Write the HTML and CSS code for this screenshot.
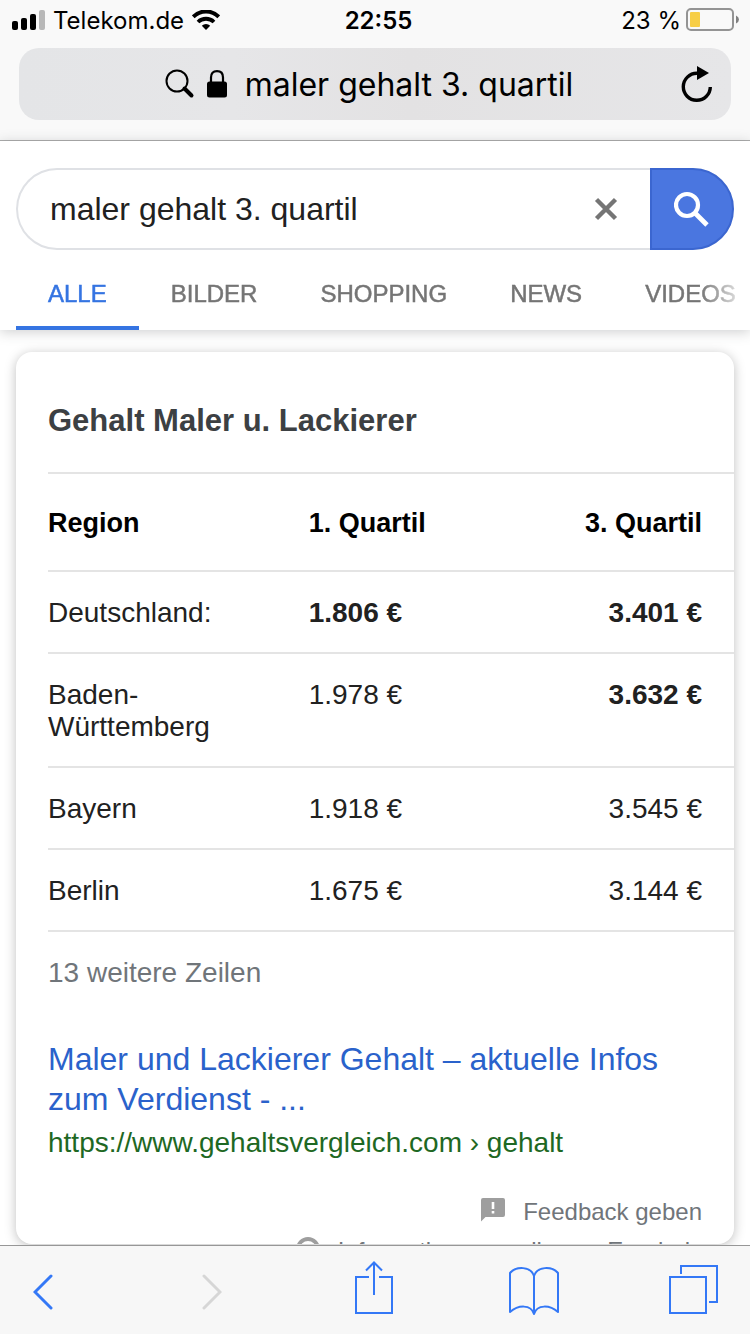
FILE: index.html
```html
<!DOCTYPE html>
<html lang="de">
<head>
  <meta charset="UTF-8">
  <meta name="viewport" content="width=device-width, initial-scale=1.0">
  <title>maler gehalt 3. quartil</title>
  <link rel="stylesheet" href="styles.css">
</head>
<body>
  <!-- browser top -->
  <header class="browser-top">
    <div class="status-bar">
      <div class="status-left">
        <svg class="signal" width="33" height="20" viewBox="0 0 33 20">
          <rect x="0" y="11" width="6" height="9" rx="2"/>
          <rect x="9" y="8" width="6" height="12" rx="2"/>
          <rect x="18" y="4" width="6" height="16" rx="2"/>
          <rect x="27" y="0" width="6" height="20" rx="2" fill="#b8b8b8"/>
        </svg>
        <span class="status-text">Telekom.de</span>
        <svg class="wifi" width="28" height="20" viewBox="0 0 28 20">
          <path d="M1.2 6.8 A18 18 0 0 1 26.8 6.8" fill="none" stroke="#000" stroke-width="4"/>
          <path d="M6 12 A11.5 11.5 0 0 1 22 12" fill="none" stroke="#000" stroke-width="3.8"/>
          <path d="M14 20 L9.8 15.8 A6 6 0 0 1 18.2 15.8 Z"/>
        </svg>
      </div>
      <span class="status-text clock">22:55</span>
      <div class="status-right">
        <span class="status-text">23 %</span>
        <svg class="battery" width="53" height="24" viewBox="0 0 53 24">
          <rect x="1" y="1" width="46" height="21" rx="4" fill="none" stroke="#949494" stroke-width="2"/>
          <rect x="4" y="4" width="10" height="15" rx="1" fill="#f7ce46"/>
          <path d="M50 7.5 Q53 9 53 11.5 Q53 14 50 15.5 Z" fill="#808080"/>
        </svg>
      </div>
    </div>
    <div class="address-bar">
      <svg width="30" height="30" viewBox="0 0 30 30">
        <circle cx="12" cy="12" r="10.5" fill="none" stroke="#000" stroke-width="2"/>
        <path d="M19.5 19.5 L26.5 26.5" stroke="#000" stroke-width="4" stroke-linecap="round"/>
      </svg>
      <svg class="lock" width="20" height="28" viewBox="0 0 20 28">
        <path d="M4 12 V7.5 Q4 1.2 10 1.2 Q16 1.2 16 7.5 V12" fill="none" stroke="#000" stroke-width="2.2"/>
        <rect x="0" y="11.5" width="20" height="16" rx="2.5"/>
      </svg>
      <span class="address">maler gehalt 3. quartil</span>
      <button class="reload" type="button" aria-label="Neu laden">
        <svg width="32" height="36" viewBox="0 0 32 36">
          <path d="M16 7.3 A13.5 13.5 0 1 0 29.3 21" fill="none" stroke="#000" stroke-width="3.4"/>
          <path d="M16 0 L28 7 L16 14 Z"/>
        </svg>
      </button>
    </div>
  </header>

  <!-- search box and tabs -->
  <div class="search-head">
    <form class="search-form">
      <input class="search-input" type="text" aria-label="Suche" value="maler gehalt 3. quartil">
      <button class="clear" type="button" aria-label="Löschen">
        <svg width="24" height="24" viewBox="0 0 24 24">
          <path d="M2.5 2.5 L21.5 21.5 M21.5 2.5 L2.5 21.5" stroke="#757575" stroke-width="4.4"/>
        </svg>
      </button>
      <button class="search-button" type="button" aria-label="Suchen">
        <svg width="36" height="36" viewBox="0 0 36 36" fill="none" stroke="#fff">
          <circle cx="13" cy="14" r="11" stroke-width="4.2"/>
          <path d="M21.5 22.5 L33 34" stroke-width="4.8"/>
        </svg>
      </button>
    </form>
    <nav class="tabs">
      <a class="tab active" href="#">ALLE</a>
      <a class="tab" href="#">BILDER</a>
      <a class="tab" href="#">SHOPPING</a>
      <a class="tab" href="#">NEWS</a>
      <a class="tab" href="#">VIDEOS</a>
    </nav>
  </div>

  <!-- results -->
  <main class="results">
    <article class="card">
      <h2>Gehalt Maler u. Lackierer</h2>
      <table>
        <thead>
          <tr><th>Region</th><th>1. Quartil</th><th>3. Quartil</th></tr>
        </thead>
        <tbody>
          <tr><td>Deutschland:</td><td><b>1.806 €</b></td><td><b>3.401 €</b></td></tr>
          <tr><td>Baden-<br>Württemberg</td><td>1.978 €</td><td><b>3.632 €</b></td></tr>
          <tr><td>Bayern</td><td>1.918 €</td><td>3.545 €</td></tr>
          <tr><td>Berlin</td><td>1.675 €</td><td>3.144 €</td></tr>
        </tbody>
      </table>
      <p class="more">13 weitere Zeilen</p>
      <a class="result-title" href="#">Maler und Lackierer Gehalt – aktuelle Infos zum Verdienst - ...</a>
      <p class="result-url">https://www.gehaltsvergleich.com › gehalt</p>
      <div class="card-footer">
        <a href="#">
          <svg width="24" height="24" viewBox="0 0 24 24">
            <path d="M2 0 H22 Q24 0 24 2 V17 Q24 19 22 19 H4.5 L0 23.5 V2 Q0 0 2 0 Z" fill="#9e9e9e"/>
            <path d="M10.7 4 H13.3 V11 H10.7 Z M10.7 13 H13.3 V15.6 H10.7 Z" fill="#fff"/>
          </svg>
          Feedback geben
        </a>
        <a href="#">
          <svg width="24" height="24" viewBox="0 0 24 24" fill="none" stroke="#9e9e9e">
            <circle cx="12" cy="12" r="10" stroke-width="4"/>
            <path d="M8 13 Q8 9 12 9 Q16 9 16 12 Q16 14 12 15 V18" stroke-width="2"/>
          </svg>
          Informationen zu diesem Ergebnis
        </a>
      </div>
    </article>
  </main>

  <!-- browser bottom -->
  <footer class="toolbar">
    <button type="button" aria-label="Zurück">
      <svg width="20" height="41" viewBox="0 0 20 41" fill="none" stroke="#3478f6">
        <path d="M18 2 L2 18 L18 34" stroke-width="3" stroke-linecap="round"/>
      </svg>
    </button>
    <button type="button" aria-label="Vorwärts" disabled>
      <svg width="20" height="41" viewBox="0 0 20 41" fill="none" stroke="#d6d6d6">
        <path d="M2 2 L18 18 L2 34" stroke-width="3" stroke-linecap="round"/>
      </svg>
    </button>
    <button type="button" aria-label="Teilen">
      <svg width="38" height="54" viewBox="0 0 38 54" fill="none" stroke="#3478f6" stroke-width="2">
        <path d="M14 16 H1 V52 H37 V16 H24"/>
        <path d="M19 34 V1.5 M11 9.5 L19 1.5 L27 9.5"/>
      </svg>
    </button>
    <button type="button" aria-label="Lesezeichen">
      <svg class="book" width="50" height="48" viewBox="0 0 50 48" fill="none" stroke="#3478f6" stroke-width="2" stroke-linejoin="round">
        <path d="M25 9 C22 -1 7 -1 1 6 V45 C9 38 22 37 25 47 C28 37 41 38 49 45 V6 C43 -1 28 -1 25 9 V47"/>
      </svg>
    </button>
    <button type="button" aria-label="Tabs">
      <svg width="50" height="50" viewBox="0 0 50 50" fill="none" stroke="#3478f6" stroke-width="2">
        <rect x="1" y="12" width="36" height="36"/>
        <path d="M12 9 V1 H48 V37 H40"/>
      </svg>
    </button>
  </footer>
</body>
</html>
```
FILE: styles.css
```css
* {
  box-sizing: border-box;
}

body {
  margin: 0;
  height: 100vh;
  display: flex;
  flex-direction: column;
  overflow: hidden;
  background: #fff;
  color: #212121;
  font-family: "Liberation Sans", Arial, sans-serif;
  font-size: 28px;
  line-height: 32px;
}

button {
  padding: 0;
  border: 0;
  background: none;
}

svg {
  display: block;
  flex: none;
}

a {
  text-decoration: none;
}

/* browser top */
.browser-top {
  background: #f9f9f9;
  border-bottom: 1px solid #adadad;
  padding: 0 19px 20px;
  color: #000;
  font-family: Inter, sans-serif;
}

.status-bar {
  display: grid;
  grid-template-columns: 1fr auto 1fr;
  align-items: center;
  height: 48px;
  margin: 0 -8px;
  padding: 0 0 8px 1px;
  font-size: 24px;
}

.status-text {
  padding-top: 2px;
}

.status-left,
.status-right {
  display: flex;
  align-items: center;
  gap: 8px;
}

.status-right {
  justify-content: flex-end;
  gap: 5px;
}

.clock {
  padding-left: 6px;
  font-weight: 600;
}

.address-bar {
  position: relative;
  display: flex;
  align-items: center;
  justify-content: center;
  gap: 12px;
  height: 72px;
  padding-right: 12px;
  border-radius: 20px;
  background: linear-gradient(90deg, #e4e5e7, #e6e6e8 30%, #e3e2e3 55%, #e6e6e8);
}

.address {
  margin-left: 6px;
  padding-top: 2px;
  font-size: 32px;
}

.reload {
  position: absolute;
  right: 18px;
  top: 18px;
}

/* search */
.search-head {
  position: relative;
  padding: 27px 16px 0;
  background: #fff;
  box-shadow: 0 2px 12px rgba(60, 64, 67, 0.25);
}

.search-form {
  display: flex;
  height: 82px;
  border: 2px solid #dfe1e5;
  border-right: 0;
  border-radius: 41px;
}

.search-input {
  flex: 1;
  min-width: 0;
  padding: 0 0 0 32px;
  border: 0;
  outline: 0;
  background: none;
  color: #212121;
  font: 32px "Liberation Sans", Arial, sans-serif;
}

.clear {
  width: 88px;
  display: grid;
  place-items: center;
}

.search-button {
  width: 84px;
  margin: -2px 0;
  display: grid;
  place-items: center;
  border: 2px solid #3b66d0;
  border-radius: 0 41px 41px 0;
  background: #4a76e0;
}

.tabs {
  display: flex;
  margin-right: -16px;
  overflow: hidden;
  -webkit-mask-image: linear-gradient(90deg, #000 calc(100% - 50px), transparent);
  mask-image: linear-gradient(90deg, #000 calc(100% - 50px), transparent);
}

.tab {
  padding: 28px 32px 16px;
  border-bottom: 4px solid transparent;
  color: #757575;
  font-size: 24px;
  -webkit-text-stroke: 0.5px;
}

.tab + .tab {
  padding-right: 31px;
}

.tab.active {
  color: #3574e2;
  border-color: #3574e2;
}

/* result card */
.results {
  flex: 1;
  min-height: 0;
  display: flex;
  padding: 22px 16px 1px;
}

.card {
  flex: 1;
  min-width: 0;
  padding: 48px 0 0 32px;
  overflow: hidden;
  border-radius: 16px;
  background: #fff;
  box-shadow: 0 2px 12px rgba(0, 0, 0, 0.25);
}

h2 {
  margin: 0 0 30px;
  color: #3c4043;
  font-size: 31px;
  line-height: 42px;
}

table {
  width: 100%;
  border-collapse: collapse;
  table-layout: fixed;
}

tr {
  border: solid #e4e4e4;
  border-width: 2px 0;
}

th,
td {
  padding: 25px 0 23px;
  text-align: left;
  vertical-align: top;
}

th {
  padding: 33px 0 31px;
  color: #000;
  font-size: 27px;
}

th:first-child {
  width: 38%;
}

th:last-child,
td:last-child {
  padding-right: 32px;
  text-align: right;
}

.more {
  margin: 25px 0 50px;
  color: #70757a;
}

.result-title {
  display: block;
  margin-right: 32px;
  color: #2a62cb;
  font-size: 32px;
  line-height: 40px;
}

.result-url {
  margin: 8px 0 39px;
  color: #1e6823;
}

.card-footer {
  display: flex;
  flex-direction: column;
  align-items: flex-end;
  gap: 11px;
  padding-right: 32px;
}

.card-footer a {
  display: flex;
  align-items: flex-start;
  gap: 18px;
  color: #70757a;
  font-size: 24px;
  line-height: 28px;
  white-space: nowrap;
}

/* browser bottom */
.toolbar {
  position: relative;
  display: grid;
  grid-template-columns: 169fr 153fr 154fr 160fr 50px;
  align-items: end;
  justify-items: start;
  height: 89px;
  padding: 0 31px 19px 33px;
  border-top: 1px solid #979797;
  background: #f7f7f7;
}
```
